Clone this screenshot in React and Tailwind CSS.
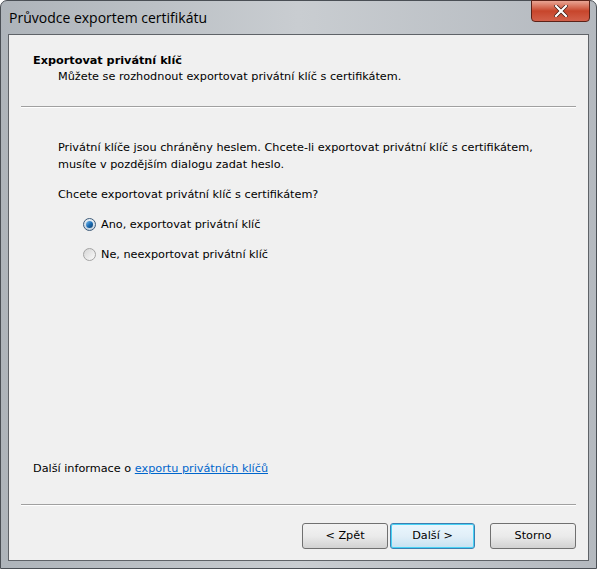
export default function App() {
  const ui = { fontFamily: '"DejaVu Sans", Verdana, sans-serif' };
  return (
    <div className="w-[597px] h-[569px] bg-white">
      {/* window frame */}
      <div className="w-[597px] h-[569px] rounded-t-[7px] border border-[#4a4f55] bg-gradient-to-r from-[#aeb4ba] via-[#c9cdd1] to-[#b4b9bf] flex flex-col px-[7px] pb-[7px]">
        {/* title bar */}
        <div className="h-[33px] flex items-start justify-between shrink-0">
          <div
            className="pt-[6px] pl-[1px] text-[14px] text-black"
            style={{ fontFamily: '"Open Sans", "Noto Sans", sans-serif' }}
          >
            Průvodce exportem certifikátu
          </div>
          <div className="w-[59px] h-[22px] -mt-px mr-[-1px] rounded-b-[4px] border border-[#5b2218] bg-gradient-to-b from-[#e8a493] via-[#c7452b] to-[#d2604a] flex items-center justify-center">
            <svg width="14" height="12" viewBox="0 0 14 12">
              <path d="M2 1 L12 11 M12 1 L2 11" stroke="#3b1a14" strokeWidth="3.6" strokeLinecap="square" />
              <path d="M2 1 L12 11 M12 1 L2 11" stroke="#ffffff" strokeWidth="2.2" strokeLinecap="square" />
            </svg>
          </div>
        </div>

        {/* client area */}
        <div className="flex-1 border border-[#5f6368] bg-[#f0f0f0] flex flex-col text-[11.25px] text-black" style={ui}>
          {/* header */}
          <div className="pl-[24px] pt-[18px]">
            <div className="font-bold leading-[16px]">Exportovat privátní klíč</div>
            <div className="pl-[25px] leading-[16px]">Můžete se rozhodnout exportovat privátní klíč s certifikátem.</div>
          </div>
          <div className="mx-[12px] mt-[21px] h-[2px] border-t border-[#a0a0a0] border-b-white border-b" />

          {/* body */}
          <div className="pl-[49px] pt-[31px] pr-[12px]">
            <p className="leading-[17px]">
              Privátní klíče jsou chráněny heslem. Chcete-li exportovat privátní klíč s certifikátem,
              <br />
              musíte v pozdějším dialogu zadat heslo.
            </p>
            <p className="mt-[13px] leading-[17px]">Chcete exportovat privátní klíč s certifikátem?</p>

            <div className="pl-[25px] mt-[15px] flex flex-col gap-[17px]">
              <label className="flex items-center gap-[5px] leading-[13px]">
                <span className="w-[13px] h-[13px] rounded-full border border-[#3d5a78] bg-gradient-to-b from-[#e6eef5] to-[#c4d2df] flex items-center justify-center">
                  <span className="w-[7px] h-[7px] rounded-full bg-gradient-to-br from-[#7fc3f0] via-[#1d70b8] to-[#0b3d6e]" />
                </span>
                Ano, exportovat privátní klíč
              </label>
              <label className="flex items-center gap-[5px] leading-[13px]">
                <span className="w-[13px] h-[13px] rounded-full border border-[#a3a3a3] bg-gradient-to-br from-[#d5d5d5] to-[#fbfbfb]" />
                Ne, neexportovat privátní klíč
              </label>
            </div>
          </div>

          <div className="flex-1" />

          {/* footer link */}
          <div className="pl-[24px] leading-[16px]">
            Další informace o{" "}
            <span className="text-[#0066cc] underline">exportu privátních klíčů</span>
          </div>
          <div className="mx-[12px] mt-[27px] h-[2px] border-t border-[#a0a0a0] border-b-white border-b" />

          {/* buttons */}
          <div className="flex justify-end pr-[12px] pt-[17px] pb-[11px]">
            <button className="w-[86px] h-[26px] rounded-[3px] border border-[#707070] bg-gradient-to-b from-[#f2f2f2] via-[#ebebeb] to-[#d2d2d2]">
              &lt; Zpět
            </button>
            <button className="ml-[2px] w-[85px] h-[26px] rounded-[3px] border border-[#3c7fb1] bg-gradient-to-b from-[#eaf6fd] via-[#e1eff8] to-[#c6e1f1] shadow-[inset_0_0_0_1px_#48d2f5]">
              Další &gt;
            </button>
            <button className="ml-[15px] w-[86px] h-[26px] rounded-[3px] border border-[#707070] bg-gradient-to-b from-[#f2f2f2] via-[#ebebeb] to-[#d2d2d2]">
              Storno
            </button>
          </div>
        </div>
      </div>
    </div>
  );
}
